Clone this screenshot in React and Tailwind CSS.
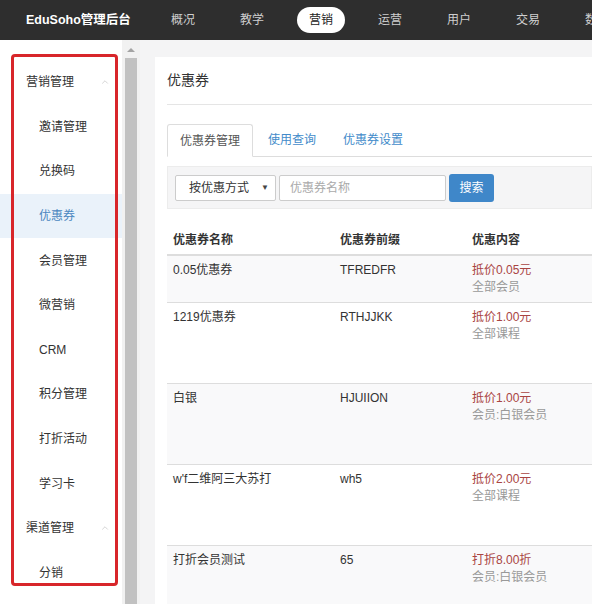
import React from "react";
import { ChevronUp } from "lucide-react";

const font = { fontFamily: '"Liberation Sans", "Noto Sans CJK SC", sans-serif' };

const navItems = ["概况", "教学", "营销", "运营", "用户", "交易", "数据"];

const menu = [
  { label: "营销管理", group: true },
  { label: "邀请管理" },
  { label: "兑换码" },
  { label: "优惠券", active: true },
  { label: "会员管理" },
  { label: "微营销" },
  { label: "CRM" },
  { label: "积分管理" },
  { label: "打折活动" },
  { label: "学习卡" },
  { label: "渠道管理", group: true },
  { label: "分销" },
];

const coupons = [
  { name: "0.05优惠券", prefix: "TFREDFR", rate: "抵价0.05元", target: "全部会员", h: "h-[47px]" },
  { name: "1219优惠券", prefix: "RTHJJKK", rate: "抵价1.00元", target: "全部课程", h: "h-[81px]" },
  { name: "白银", prefix: "HJUIION", rate: "抵价1.00元", target: "会员:白银会员", h: "h-[81px]" },
  { name: "w'f二维阿三大苏打", prefix: "wh5", rate: "抵价2.00元", target: "全部课程", h: "h-[81px]" },
  { name: "打折会员测试", prefix: "65", rate: "打折8.00折", target: "会员:白银会员", h: "h-[81px]" },
];

export default function App() {
  return (
    <div className="h-[604px] w-[592px] overflow-hidden bg-[#f4f4f5]" style={font}>
      {/* 顶部导航 */}
      <header className="flex h-[40px] items-center bg-[#2e2e2e]">
        <div className="ml-[26px] w-[133px] shrink-0 text-[12.5px] font-bold text-white">EduSoho管理后台</div>
        <nav className="flex items-center gap-[21px] whitespace-nowrap">
          {navItems.map((item) => (
            <span
              key={item}
              className={
                item === "营销"
                  ? "rounded-full bg-white px-[12px] py-[4px] text-[12px] text-[#222]"
                  : "px-[12px] py-[4px] text-[12px] text-[#cfcfcf]"
              }
            >
              {item}
            </span>
          ))}
        </nav>
      </header>

      <div className="flex h-[564px]">
        {/* 侧边栏 */}
        <aside className="relative w-[122px] shrink-0 bg-white pt-[20px]">
          {menu.map((m) => (
            <div
              key={m.label}
              className={`flex h-[44.6px] items-center text-[12px] ${
                m.group ? "justify-between pl-[26px] pr-[12px] text-[#333]" : "pl-[39px]"
              } ${m.active ? "bg-[#eaf2fa] text-[#4a87c0]" : m.group ? "" : "text-[#333]"}`}
            >
              <span>{m.label}</span>
              {m.group && <ChevronUp size={10} strokeWidth={1.5} className="text-[#bbb]" />}
            </div>
          ))}
          {/* 标注红框 */}
          <div className="pointer-events-none absolute left-[11px] top-[14px] h-[532px] w-[107px] rounded-[4px] border-[3px] border-[#d8262a]" />
        </aside>

        {/* 滚动条 */}
        <div className="flex w-[18px] shrink-0 flex-col items-center bg-[#f1f1f1] pt-[8px]">
          <div className="h-0 w-0 border-x-[4px] border-b-[4px] border-x-transparent border-b-[#a3a3a3]" />
          <div className="ml-[-1px] mt-[6px] h-full w-[12px] bg-[#c1c1c1]" />
        </div>

        {/* 主内容 */}
        <main className="flex-1 pl-[15px] pt-[17px]">
          <div className="h-full bg-white pl-[12px]">
            <div className="flex h-[48px] items-center border-b border-[#e5e5e5] text-[14px] text-[#333]">
              优惠券
            </div>

            {/* 标签页 */}
            <div className="mt-[19px] flex h-[33px] border-b border-[#ddd] text-[12px]">
              <div className="-mb-px flex items-center rounded-t-[3px] border border-b-white border-[#ddd] bg-white px-[12px] text-[#555]">
                优惠券管理
              </div>
              <div className="flex items-center px-[15px] text-[#428bca]">使用查询</div>
              <div className="flex items-center px-[12px] text-[#428bca]">优惠券设置</div>
            </div>

            {/* 搜索栏 */}
            <div className="mt-[9px] flex h-[43px] items-center gap-[3px] border border-[#ececec] bg-[#f5f5f6] pl-[7px]">
              <div className="flex h-[26px] w-[101px] items-center justify-between rounded-[2px] border border-[#ccc] bg-white pl-[13px] pr-[6px] text-[12px] text-[#333]">
                <span>按优惠方式</span>
                <span className="text-[8px] text-[#444]">▼</span>
              </div>
              <div className="flex h-[26px] w-[167px] items-center rounded-[2px] border border-[#ccc] bg-white pl-[10px] text-[12px] text-[#aaa]">
                优惠券名称
              </div>
              <button className="h-[28px] w-[45px] rounded-[3px] bg-[#3f87c9] text-[12px] text-white">搜索</button>
            </div>

            {/* 表格 */}
            <table className="mt-[22px] w-full border-collapse text-left text-[12px] text-[#333]">
              <thead>
                <tr className="h-[24px] border-b-2 border-[#ddd]">
                  <th className="w-[167px] pl-[6px] align-top font-bold">优惠券名称</th>
                  <th className="w-[132px] pl-[6px] align-top font-bold">优惠券前缀</th>
                  <th className="pl-[6px] align-top font-bold">优惠内容</th>
                </tr>
              </thead>
              <tbody>
                {coupons.map((c, i) => (
                  <tr key={c.name} className={`${c.h} border-t border-[#ddd] ${i % 2 === 0 ? "bg-[#f9f9fa]" : "bg-white"}`}>
                    <td className="pl-[6px] pt-[6px] align-top leading-[17px]">{c.name}</td>
                    <td className="pl-[6px] pt-[6px] align-top leading-[17px]">{c.prefix}</td>
                    <td className="pl-[6px] pt-[6px] align-top leading-[17px]">
                      <div className="text-[#a94442]">{c.rate}</div>
                      <div className="text-[#999]">{c.target}</div>
                    </td>
                  </tr>
                ))}
              </tbody>
            </table>
          </div>
        </main>
      </div>
    </div>
  );
}
